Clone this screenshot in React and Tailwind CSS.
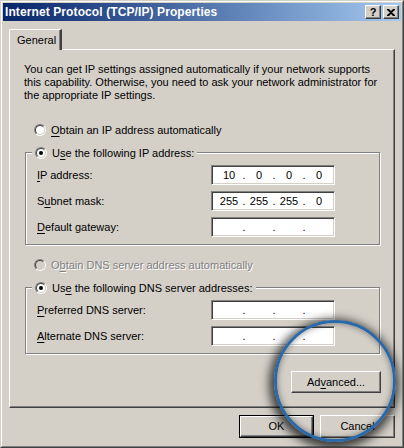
import React from "react";

const Radio = ({ checked, disabled }) => (
  <span className="inline-flex w-[12px] h-[12px] rounded-full border border-t-[#808080] border-l-[#808080] border-r-white border-b-white shrink-0">
    <span
      className={`flex-1 rounded-full border border-t-[#404040] border-l-[#404040] border-r-[#d4d0c8] border-b-[#d4d0c8] flex items-center justify-center ${
        disabled ? "bg-[#d4d0c8]" : "bg-white"
      }`}
    >
      {checked && <span className="w-[4px] h-[4px] rounded-full bg-black" />}
    </span>
  </span>
);

const U = ({ children }) => <span className="underline underline-offset-[2px]">{children}</span>;

const IpBox = ({ value }) => {
  const parts = value || ["", "", "", ""];
  return (
    <div className="w-[124px] h-[20px] border border-t-[#808080] border-l-[#808080] border-r-white border-b-white shadow-[inset_1px_1px_0_#404040,inset_-1px_-1px_0_#d4d0c8] bg-white flex items-center pl-[5px]">
      {parts.map((p, i) => (
        <React.Fragment key={i}>
          <span className="w-[24px] text-center">{p}</span>
          {i < 3 && <span className="w-[6px] text-center">.</span>}
        </React.Fragment>
      ))}
    </div>
  );
};

const Button = ({ children, isDefault, className = "" }) => (
  <div className={`${isDefault ? "border border-black" : ""} ${className}`}>
    <div className="h-full border border-t-white border-l-white border-r-[#404040] border-b-[#404040] shadow-[inset_-1px_-1px_0_#808080] flex items-center justify-center">
      {children}
    </div>
  </div>
);

const Row = ({ label, value }) => (
  <div className="flex items-center h-[20px]">
    <div className="w-[174px]">{label}</div>
    <IpBox value={value} />
  </div>
);

export default function App() {
  return (
    <div className="w-[404px] h-[448px] relative overflow-hidden bg-[#d4d0c8] text-black text-[11px] leading-[13px] font-['Liberation_Sans',Arial,sans-serif] border border-t-[#d4d0c8] border-l-[#d4d0c8] border-r-[#404040] border-b-[#404040]">
      <div className="h-full border border-t-white border-l-white border-r-[#808080] border-b-[#808080] p-px flex flex-col">
        {/* title bar */}
        <div className="h-[18px] bg-gradient-to-r from-[#0a246a] to-[#a6caf0] flex items-center pl-[2px] pr-[2px]">
          <div className="flex-1 text-white font-bold text-[12px] tracking-[0.1px]">Internet Protocol (TCP/IP) Properties</div>
          <div className="w-[16px] h-[14px] bg-[#d4d0c8] border border-t-white border-l-white border-r-[#404040] border-b-[#404040] shadow-[inset_-1px_-1px_0_#808080] flex items-center justify-center font-bold text-[11px] leading-none">
            ?
          </div>
          <div className="w-[16px] h-[14px] ml-[2px] bg-[#d4d0c8] border border-t-white border-l-white border-r-[#404040] border-b-[#404040] shadow-[inset_-1px_-1px_0_#808080] flex items-center justify-center">
            <svg width="8" height="7" viewBox="0 0 8 7">
              <path d="M0 0h2l2 2 2-2h2v1L5 3.5 8 6v1H6L4 5 2 7H0V6l3-2.5L0 1z" fill="#000" />
            </svg>
          </div>
        </div>

        {/* body */}
        <div className="pl-[6px] pt-[8px]">
          {/* tab */}
          <div className="relative z-10 w-[53px] h-[21px] -mb-px bg-[#d4d0c8] border-t border-l border-t-white border-l-white rounded-tl-[2px] border-r-2 border-r-[#404040] shadow-[inset_-1px_0_0_#808080] flex items-center pl-[7px]">
            General
          </div>
          <div className="w-[386px] h-[359px] border border-t-white border-l-white border-r-[#404040] border-b-[#404040] shadow-[inset_-1px_-1px_0_#808080] pl-[14px] pt-[13px]">
            <p>
              You can get IP settings assigned automatically if your network supports
              <br />
              this capability. Otherwise, you need to ask your network administrator for
              <br />
              the appropriate IP settings.
            </p>

            <div className="mt-[20px] h-[16px] flex items-center pl-[10px] gap-[5px]">
              <Radio />
              <span>
                <U>O</U>btain an IP address automatically
              </span>
            </div>

            <div className="relative ml-px mt-[14px] w-[355px] border border-[#808080] shadow-[inset_1px_1px_0_#fff,1px_1px_0_#fff] pl-[11px] pt-[12px] pb-[7px] flex flex-col gap-[6px]">
              <div className="absolute left-[6px] top-[-8px] h-[16px] bg-[#d4d0c8] flex items-center px-[3px] gap-[5px]">
                <Radio checked />
                <span>
                  U<U>s</U>e the following IP address:
                </span>
              </div>
              <Row label={<><U>I</U>P address:</>} value={["10", "0", "0", "0"]} />
              <Row label={<>S<U>u</U>bnet mask:</>} value={["255", "255", "255", "0"]} />
              <Row label={<><U>D</U>efault gateway:</>} />
            </div>

            <div className="mt-[12px] h-[16px] flex items-center pl-[10px] gap-[5px] text-[#808080]">
              <Radio disabled />
              <span className="[text-shadow:1px_1px_0_#fff]">
                O<U>b</U>tain DNS server address automatically
              </span>
            </div>

            <div className="relative ml-px mt-[14px] w-[355px] border border-[#808080] shadow-[inset_1px_1px_0_#fff,1px_1px_0_#fff] pl-[11px] pt-[12px] pb-[7px] flex flex-col gap-[6px]">
              <div className="absolute left-[6px] top-[-8px] h-[16px] bg-[#d4d0c8] flex items-center px-[3px] gap-[5px]">
                <Radio checked />
                <span>
                  Us<U>e</U> the following DNS server addresses:
                </span>
              </div>
              <Row label={<><U>P</U>referred DNS server:</>} />
              <Row label={<><U>A</U>lternate DNS server:</>} />
            </div>

            <Button className="ml-[267px] mt-[17px] w-[90px] h-[22px]">
              <span>
                Ad<U>v</U>anced...
              </span>
            </Button>
          </div>

          {/* dialog buttons */}
          <div className="flex mt-[7px] ml-[230px] gap-[6px]">
            <Button isDefault className="w-[75px] h-[23px]">
              OK
            </Button>
            <Button className="w-[75px] h-[23px]">Cancel</Button>
          </div>
        </div>
      </div>

      {/* magnifier ring */}
      <div className="absolute left-[273px] top-[319px] w-[122px] h-[122px] rounded-full border-[3px] border-[#2b68a8] shadow-[-1px_3px_10px_4px_rgba(0,0,0,0.7),inset_0_0_6px_rgba(0,0,0,0.45)] pointer-events-none" />
    </div>
  );
}
